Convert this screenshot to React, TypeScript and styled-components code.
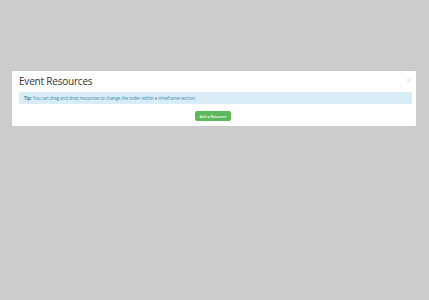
import React from 'react';
import styled, { createGlobalStyle } from 'styled-components';

const GlobalStyle = createGlobalStyle`
  html, body {
    margin: 0;
    padding: 0;
    background: #cccccc;
    font-family: "Open Sans", "Liberation Sans", sans-serif;
  }
`;

const Page = styled.div`
  width: 429px;
  height: 300px;
  padding-top: 71px;
  box-sizing: border-box;
`;

const Modal = styled.div`
  width: 404px;
  margin-left: 12px;
  background: #ffffff;
  border-radius: 1px;
  padding: 0 4px 5px 7px;
  box-sizing: border-box;
`;

const Header = styled.div`
  display: flex;
  justify-content: space-between;
  align-items: flex-start;
  height: 21px;
`;

const Title = styled.h4`
  margin: 0;
  padding-top: 1px;
  font-size: 10px;
  font-weight: 400;
  color: #333333;
  line-height: 18px;
  letter-spacing: -0.2px;
`;

const Close = styled.button`
  border: 0;
  background: none;
  padding: 0;
  margin-top: 6px;
  margin-right: 2px;
  font-size: 6px;
  line-height: 6px;
  color: #d0d0d0;
  cursor: pointer;
`;

const Alert = styled.div`
  height: 12px;
  display: flex;
  align-items: center;
  padding-left: 5px;
  background: #d9edf7;
  color: #3a87ad;
  font-size: 4.4px;
  letter-spacing: -0.04px;
  border-radius: 1px;
  white-space: nowrap;
`;

const Actions = styled.div`
  display: flex;
  justify-content: center;
  padding: 7px 5px 0 0;
`;

const Button = styled.button`
  width: 36px;
  height: 10px;
  padding: 0;
  border: 0;
  border-radius: 2px;
  background: #5cb85c;
  color: #ffffff;
  font-family: "Open Sans", "Liberation Sans", sans-serif;
  font-size: 3.6px;
  font-weight: 600;
  cursor: pointer;
`;

export default function App() {
  return (
    <Page>
      <GlobalStyle />
      <Modal>
        <Header>
          <Title>Event Resources</Title>
          <Close>×</Close>
        </Header>
        <Alert>
          <span>
            <strong>Tip:</strong> You can drag and drop resources to change the order within a timeframe section.
          </span>
        </Alert>
        <Actions>
          <Button>Add a Resource</Button>
        </Actions>
      </Modal>
    </Page>
  );
}
